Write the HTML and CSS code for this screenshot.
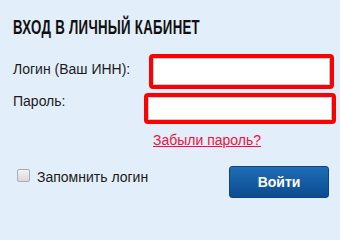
FILE: index.html
```html
<!DOCTYPE html>
<html lang="ru">
<head>
<meta charset="utf-8">
<title>Вход в личный кабинет</title>
<link rel="stylesheet" href="styles.css">
</head>
<body>
<div class="panel">
  <h1 class="title"><span class="title-text">ВХОД В ЛИЧНЫЙ КАБИНЕТ</span></h1>
  <form class="form">
    <label class="label label-login" for="login">Логин (Ваш ИНН):</label>
    <span class="ring ring-login"><input class="field field-login" id="login" type="text"></span>
    <label class="label label-pass" for="pass">Пароль:</label>
    <span class="ring ring-pass"><input class="field field-pass" id="pass" type="password"></span>
    <a class="forgot" href="#">Забыли пароль?</a>
  </form>
  <div class="bottom">
    <label class="remember"><input class="check" type="checkbox"><span class="remember-text">Запомнить логин</span></label>
    <button class="submit" type="button">Войти</button>
  </div>
</div>
</body>
</html>
```
FILE: styles.css
```css
html, body {
  margin: 0;
  padding: 0;
  background: #e2eef9;
}
body {
  font-family: "Liberation Sans", Arial, sans-serif;
  color: #1c1c1c;
  width: 340px;
  height: 211px;
  overflow: hidden;
}
.panel {
  padding: 17px 4px 0 13px;
}
.title {
  margin: 0;
  height: 20px;
  font-family: "Liberation Sans Narrow", "Liberation Sans", sans-serif;
  font-weight: bold;
  font-size: 19.5px;
  line-height: 20px;
  color: #111;
  white-space: nowrap;
}
.title-text {
  display: inline-block;
  transform: scaleX(0.68);
  transform-origin: 0 0;
  letter-spacing: 0.4px;
}
.form {
  margin-top: 17px;
  display: grid;
  grid-template-columns: 131px 1fr;
  row-gap: 4px;
}
.label {
  font-size: 14px;
  line-height: 16px;
  color: #1c1c1c;
}
.label-login {
  padding-top: 7px;
}
.label-pass {
  padding-top: 0;
}
.ring {
  display: block;
  border: 4px solid #ff0000;
  border-radius: 4px;
  background: #fff;
}
.ring-login {
  margin: 0 2px 0 5px;
  height: 27px;
}
.ring-pass {
  height: 23px;
}
.field {
  display: block;
  box-sizing: border-box;
  width: 100%;
  height: 100%;
  margin: 0;
  padding: 0 6px;
  border: 1px solid #c9cdd3;
  border-right-color: #b9bec6;
  background: #fff;
  font: 13px "Liberation Sans", Arial, sans-serif;
  outline: none;
}
.forgot {
  grid-column: 2;
  margin-top: 4px;
  padding-left: 9px;
  font-size: 14px;
  line-height: 16px;
  color: #f0143c;
  text-decoration: underline;
}
.bottom {
  margin-top: 18px;
  display: flex;
  justify-content: space-between;
  align-items: flex-start;
  padding: 0 7px 0 4px;
}
.remember {
  display: flex;
  align-items: flex-start;
  gap: 7px;
  font-size: 14px;
  line-height: 16px;
  color: #1c1c1c;
}
.check {
  appearance: none;
  -webkit-appearance: none;
  margin: 3px 0 0 0;
  width: 13px;
  height: 13px;
  box-sizing: border-box;
  border: 1px solid #a9adb3;
  border-radius: 2px;
  background: linear-gradient(#f3f3f3, #d8d8d8);
}
.remember-text {
  margin-top: 3px;
}
.submit {
  width: 100px;
  height: 32px;
  padding: 0;
  border: 1px solid #0b4585;
  border-radius: 3px;
  background: linear-gradient(#1f6db6, #0c4b90);
  color: #fff;
  font: bold 14px/30px "Liberation Sans", Arial, sans-serif;
  cursor: pointer;
}
```
